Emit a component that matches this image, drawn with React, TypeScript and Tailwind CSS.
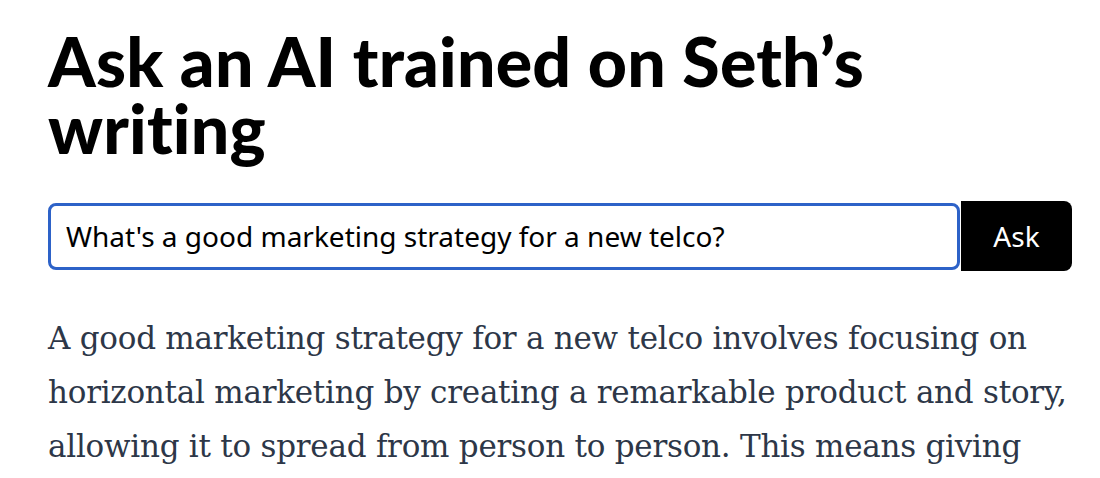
export default function App() {
  return (
    <main className="min-h-[478px] bg-white">
      <div className="w-[1072px] pl-12 pt-[27px]">
        <h1
          className="text-[68px] font-black leading-[67px] tracking-[0.2px] text-black"
          style={{ fontFamily: "Lato, 'Open Sans', sans-serif" }}
        >
          Ask an AI trained on Seth’s
          <br />
          writing
        </h1>

        <form className="mt-10 flex h-[70px] items-center" onSubmit={(e) => e.preventDefault()}>
          <input
            className="h-[67px] w-[912px] rounded-lg border-[3px] border-[#2d62c8] px-[15px] text-[28px] text-black outline-none"
            style={{ fontFamily: "'Noto Sans', 'Open Sans', sans-serif" }}
            defaultValue="What's a good marketing strategy for a new telco?"
          />
          <button
            type="submit"
            className="ml-px h-[70px] w-[111px] rounded-r-lg bg-black text-[28px] text-white"
            style={{ fontFamily: "'Noto Sans', 'Open Sans', sans-serif" }}
          >
            Ask
          </button>
        </form>

        <p
          className="mt-10 text-[31px] leading-[54px] tracking-[-0.25px] text-[#2d3748]"
          style={{ fontFamily: "'DejaVu Serif', 'Liberation Serif', serif" }}
        >
          <span className="block whitespace-nowrap">A good marketing strategy for a new telco involves focusing on</span>
          <span className="block whitespace-nowrap">horizontal marketing by creating a remarkable product and story,</span>
          <span className="block whitespace-nowrap">allowing it to spread from person to person. This means giving</span>
        </p>
      </div>
    </main>
  );
}
